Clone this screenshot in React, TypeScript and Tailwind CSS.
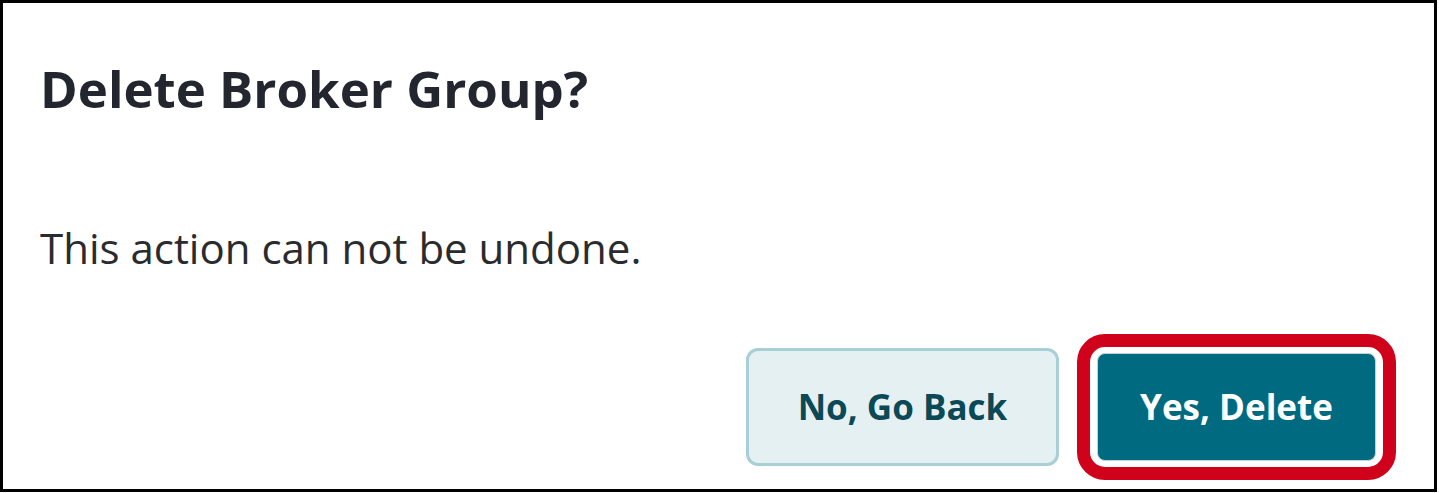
export default function App() {
  return (
    <div className="w-[1439px] h-[493px] bg-white" style={{ fontFamily: '"Open Sans", Lato, sans-serif' }}>
      <div className="w-[1437px] h-[492px] border-[3px] border-black bg-white flex flex-col pl-[37px] pr-[38px] pt-[55px]">
        <h1 className="text-[51px] leading-[60px] font-bold text-[#23262e]">Delete Broker Group?</h1>
        <p className="mt-[106px] text-[42px] leading-[48px] text-[#2a2b2e]">This action can not be undone.</p>
        <div className="mt-[62px] flex items-center justify-end gap-[18px]">
          <button className="w-[313px] h-[118px] rounded-[12px] border-[3px] border-[#a8ced6] bg-[#e5f0f2] text-[#0c4957] text-[35px] font-bold">
            No, Go Back
          </button>
          <div className="rounded-[28px] border-[13px] border-[#d0021b] bg-white px-[7px] py-[6px]">
            <button className="w-[279px] h-[108px] rounded-[8px] bg-[#006b80] border border-[#bcd3d8] text-white text-[35px] font-bold">
              Yes, Delete
            </button>
          </div>
        </div>
      </div>
    </div>
  );
}
